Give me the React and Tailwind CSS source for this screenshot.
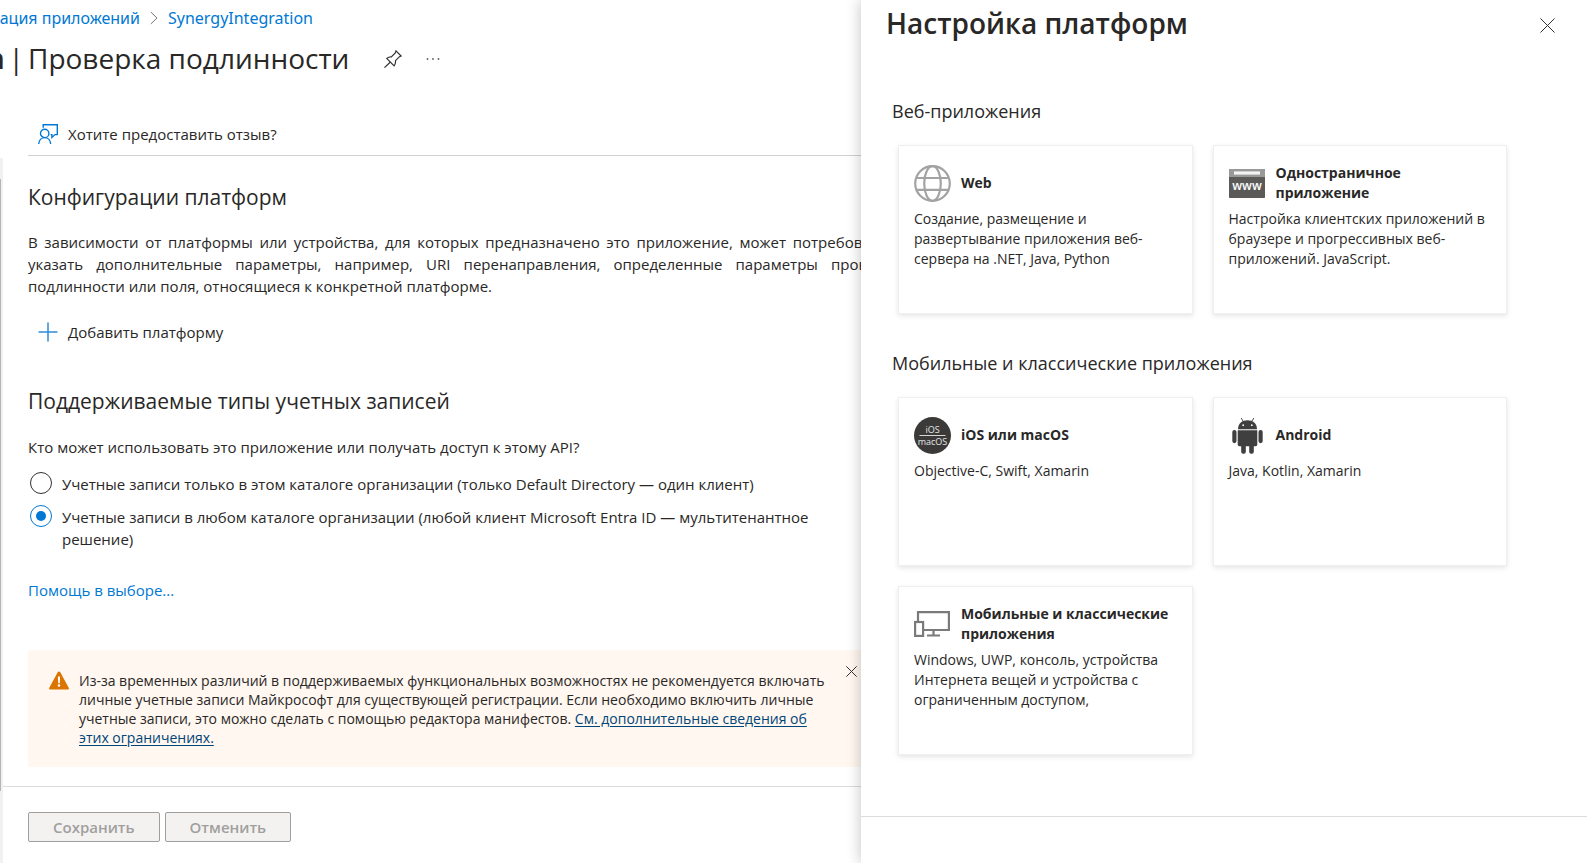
import { useState } from "react";

function ChevronIcon() {
  return (
    <svg className="h-4 w-2" viewBox="0 0 8 16" fill="none" stroke="#7a7876" aria-hidden="true">
      <path d="M.8 2 7 8 .8 14" />
    </svg>
  );
}

function PinIcon() {
  return (
    <svg className="size-[18px]" viewBox="0 0 18 18" fill="none" stroke="#323130" strokeWidth="1.2" aria-hidden="true">
      <path d="M12 .9 17.1 6l-1.6.7-4 4c.2 2-.3 3.800-1.400 5.100L2.700 8.400C4 7.300 5.500 6.700 7.300 6.800l4-4z" />
      <path d="M6.400 12 .5 17.600" />
    </svg>
  );
}

function FeedbackIcon() {
  return (
    <svg className="size-5" viewBox="0 0 20 20" fill="none" stroke="#0078d4" strokeWidth="1.400" aria-hidden="true">
      <circle cx="6.700" cy="9.400" r="4.200" />
      <path d="M.7 20c.2-3.800 2.700-6.400 6-6.400s5.800 2.600 6 6.400" />
      <path d="M5.200 3.800V.8h14.100v9.800h-2.300l-3.100 2.900v-2.900h-1.300" />
    </svg>
  );
}

function PlusIcon() {
  return (
    <svg className="size-5" viewBox="0 0 20 20" stroke="#2b8cdb" strokeWidth="1.500" aria-hidden="true">
      <path d="M10 .5v19M.5 10h19" />
    </svg>
  );
}

function CloseIcon({ className }) {
  return (
    <svg className={className} viewBox="0 0 16 16" stroke="#323130" aria-hidden="true">
      <path d="m.5.5 15 15m0-15-15 15" vectorEffect="non-scaling-stroke" />
    </svg>
  );
}

function WarningIcon() {
  return (
    <svg className="h-[19px] w-5 shrink-0" viewBox="0 0 20 19" aria-hidden="true">
      <path d="M10 .5c.6 0 1 .3 1.300.8l8.400 15.500c.5.900 0 1.700-1 1.700H1.300c-1 0-1.500-.8-1-1.700L8.700 1.300c.3-.5.7-.8 1.300-.8z" fill="#db7500" />
      <path d="M8.900 5.600h2.200l-.3 6.600H9.200z" fill="#fff" />
      <circle cx="10" cy="14.500" r="1.300" fill="#fff" />
    </svg>
  );
}

function GlobeIcon() {
  return (
    <svg className="size-[37px]" viewBox="0 0 37 37" fill="none" stroke="#a3a3a3" strokeWidth="2.200" aria-hidden="true">
      <circle cx="18.500" cy="18.500" r="17.300" />
      <ellipse cx="18.500" cy="18.500" rx="8.300" ry="17.300" />
      <path d="M2.300 13h32.400M2.300 24.800h32.400" />
    </svg>
  );
}

function BrowserIcon() {
  return (
    <svg className="h-[29px] w-9" viewBox="0 0 36 29" aria-hidden="true">
      <rect width="36" height="29" rx=".8" fill="#5b5a59" />
      <path d="M0 8V.8Q0 0 .8 0h34.400q.8 0 .8.800V8z" fill="#999" />
      <rect x="5" y="2.400" width="26" height="3.200" fill="#f4f4f4" />
      <text x="18" y="20.500" textAnchor="middle" fill="#fff" className="font-['Open_Sans',sans-serif] text-[12px] font-semibold">
        www
      </text>
    </svg>
  );
}

function AppleIcon() {
  return (
    <svg className="size-[37px]" viewBox="0 0 37 37" aria-hidden="true">
      <circle cx="18.500" cy="18.500" r="18.500" fill="#3b3a39" />
      <path d="M5.500 18.500h26" stroke="#d6d6d6" />
      <text x="18.500" y="15.500" textAnchor="middle" fill="#e6e6e6" className="font-['Open_Sans',sans-serif] text-[9px]">
        iOS
      </text>
      <text x="18.500" y="28" textAnchor="middle" fill="#e6e6e6" className="font-['Open_Sans',sans-serif] text-[9px]">
        macOS
      </text>
    </svg>
  );
}

function AndroidIcon() {
  return (
    <svg className="size-[37px]" viewBox="0 0 37 37" fill="#3f3f3f" aria-hidden="true">
      <path d="M9 12.200C9 6.500 13.300 3.300 18.500 3.300S28 6.500 28 12.200z" />
      <path d="m14.500 5-2.300-4M22.500 5l2.300-4" stroke="#3f3f3f" strokeWidth=".9" />
      <circle cx="14.200" cy="8.200" r=".9" fill="#fff" />
      <circle cx="22.800" cy="8.200" r=".9" fill="#fff" />
      <path d="M8.700 13.200h19.600v14.300q0 1.700-1.700 1.700H10.400q-1.700 0-1.700-1.700z" />
      <rect x="3.300" y="13" width="4.200" height="13.200" rx="2.100" />
      <rect x="29.500" y="13" width="4.200" height="13.200" rx="2.100" />
      <rect x="12.200" y="26" width="4.600" height="10.800" rx="2" />
      <rect x="20.200" y="26" width="4.600" height="10.800" rx="2" />
    </svg>
  );
}

function DevicesIcon() {
  return (
    <svg className="h-[26px] w-9" viewBox="0 0 36 26" fill="none" stroke="#7a7a7a" strokeWidth="2.200" aria-hidden="true">
      <path d="M4 10V1.100h30.900V19H10" />
      <rect x="1.100" y="11" width="8" height="13.900" />
      <path d="M19.500 19v5M13 24.500h13" />
    </svg>
  );
}

const webPlatforms = [
  {
    Icon: GlobeIcon,
    title: "Web",
    text: "Создание, размещение и развертывание приложения веб-сервера на .NET, Java, Python",
  },
  {
    Icon: BrowserIcon,
    title: "Одностраничное приложение",
    text: "Настройка клиентских приложений в браузере и прогрессивных веб-приложений. JavaScript.",
  },
];

const mobilePlatforms = [
  { Icon: AppleIcon, title: "iOS или macOS", text: "Objective-C, Swift, Xamarin" },
  { Icon: AndroidIcon, title: "Android", text: "Java, Kotlin, Xamarin" },
  {
    Icon: DevicesIcon,
    title: "Мобильные и классические приложения",
    text: "Windows, UWP, консоль, устройства Интернета вещей и устройства с ограниченным доступом,",
  },
];

const accountTypes = [
  { id: "single", label: "Учетные записи только в этом каталоге организации (только Default Directory — один клиент)" },
  {
    id: "multi",
    label: "Учетные записи в любом каталоге организации (любой клиент Microsoft Entra ID — мультитенантное решение)",
  },
];

function PlatformCard({ Icon, title, text }) {
  return (
    <button
      type="button"
      className="flex min-h-[169px] flex-col items-stretch justify-start border border-[#efefef] bg-white px-[15px] pt-[17px] pb-4 text-left text-[14px] leading-5 shadow-[0_2px_5px_rgba(0,0,0,0.1)]"
    >
      <span className="flex min-h-10 items-center gap-2.5">
        <span className="flex w-[37px] shrink-0">
          <Icon />
        </span>
        <span className="font-bold">{title}</span>
      </span>
      <span className="mt-1.5">{text}</span>
    </button>
  );
}

function PlatformSection({ heading, items }) {
  return (
    <section>
      <h3 className="pl-[31px] text-[18px] leading-6">{heading}</h3>
      <div className="mt-[22px] grid grid-cols-2 gap-5 pr-20 pl-[37px]">
        {items.map((item) => (
          <PlatformCard key={item.title} {...item} />
        ))}
      </div>
    </section>
  );
}

function PlatformPanel() {
  return (
    <aside className="relative flex w-[726px] shrink-0 flex-col bg-white shadow-[0_0_14px_rgba(0,0,0,0.24)]">
      <header className="flex items-start justify-between pt-[5px] pr-8 pl-[25px]">
        <h2 className="text-[28px] leading-9 font-semibold">Настройка платформ</h2>
        <button type="button" aria-label="Закрыть" className="mt-[13px]">
          <CloseIcon className="size-[15px]" />
        </button>
      </header>
      <div className="flex flex-1 flex-col gap-[37px] pt-[58px] pb-[60px]">
        <PlatformSection heading="Веб-приложения" items={webPlatforms} />
        <PlatformSection heading="Мобильные и классические приложения" items={mobilePlatforms} />
      </div>
      <footer className="h-[47px] border-t border-[#dcdcdc]" />
    </aside>
  );
}

function PageHeader() {
  return (
    <header className="pt-1.5">
      <nav className="flex items-center font-['Noto_Sans',sans-serif] text-[16px] leading-6 whitespace-nowrap text-[#0078d4]">
        <span className="flex w-[140px] justify-end overflow-hidden">
          <a href="#apps">ация приложений</a>
        </span>
        <span className="mx-2.5">
          <ChevronIcon />
        </span>
        <a href="#app">SynergyIntegration</a>
      </nav>
      <div className="mt-2.5 flex items-center">
        <h1 className="flex text-[28px] leading-9 whitespace-nowrap">
          <span className="flex w-7 justify-end gap-1 overflow-hidden pr-1">
            <b className="font-bold">n</b>
            <span>|</span>
          </span>
          Проверка подлинности
        </h1>
        <button type="button" aria-label="Закрепить" className="mt-0.5 ml-[35px]">
          <PinIcon />
        </button>
        <button type="button" aria-label="Дополнительно" className="mt-0.5 ml-6">
          <svg className="h-1 w-[14px]" viewBox="0 0 14 4" fill="#605e5c" aria-hidden="true">
            <circle cx="1.500" cy="2" r=".9" />
            <circle cx="7" cy="2" r=".9" />
            <circle cx="12.500" cy="2" r=".9" />
          </svg>
        </button>
      </div>
      <div className="mt-[47px] ml-7 border-b border-[#d2d0ce] pb-2.5 pl-2.5">
        <button type="button" className="flex items-center gap-2.5 leading-[22px]">
          <FeedbackIcon />
          Хотите предоставить отзыв?
        </button>
      </div>
    </header>
  );
}

function AccountTypes() {
  const [selected, setSelected] = useState("multi");
  return (
    <fieldset>
      <legend>Кто может использовать это приложение или получать доступ к этому API?</legend>
      <div className="mt-3.5 flex flex-col gap-2.5 pl-0.5">
        {accountTypes.map(({ id, label }) => (
          <div key={id} className="flex items-start gap-2.5">
            <input
              type="radio"
              id={id}
              name="account-type"
              checked={selected === id}
              onChange={() => setSelected(id)}
              className="size-[22px] shrink-0 appearance-none rounded-full border border-[#323130] bg-clip-content p-[5px] checked:border-[#0078d4] checked:bg-[#0078d4]"
            />
            <label htmlFor={id} className="pt-px">
              {label}
            </label>
          </div>
        ))}
      </div>
    </fieldset>
  );
}

function Notice() {
  return (
    <div role="alert" className="mt-[49px] flex items-start rounded-l-xs bg-[#fff7f0] pt-[21px] pb-5 pl-[21px] text-[14px] leading-[19px]">
      <WarningIcon />
      <p className="ml-2.5 flex-1">
        Из-за временных различий в поддерживаемых функциональных возможностях не рекомендуется включать личные учетные
        записи Майкрософт для существующей регистрации. Если необходимо включить личные учетные записи, это можно сделать
        с помощью редактора манифестов.{" "}
        <a href="#limits" className="text-[#004578] underline underline-offset-2">
          См. дополнительные сведения об этих ограничениях.
        </a>
      </p>
      <button type="button" aria-label="Закрыть уведомление" className="-mt-[5px] mr-1 ml-2.5">
        <CloseIcon className="size-[11px]" />
      </button>
    </div>
  );
}

function FooterButton({ children }) {
  return (
    <button
      type="button"
      disabled
      className="h-[30px] rounded-xs border border-[#a19f9d] bg-[#f3f2f1] px-6 leading-[26px] font-semibold text-[#a19f9d]"
    >
      {children}
    </button>
  );
}

export default function App() {
  return (
    <div className="flex min-h-screen overflow-hidden bg-white font-['Open_Sans','Noto_Sans',sans-serif] text-[15px] leading-[22px] text-[#292827]">
      <main className="flex min-w-0 flex-1 flex-col overflow-hidden">
        <PageHeader />
        <div className="mt-0.5 flex flex-1">
          <div className="w-[3px] shrink-0 bg-[#f1f1f1] pt-[21px] pb-[72px]">
            <div className="h-full w-px bg-[#b5b5b5]" />
          </div>
          <div className="flex min-w-0 flex-1 flex-col">
            <div className="pt-[25px] pb-[19px] pl-[25px]">
              <h2 className="text-[21px] leading-7">Конфигурации платформ</h2>
              <p className="mt-5 w-[874px] text-justify">
                В зависимости от платформы или устройства, для которых предназначено это приложение, может потребоваться
                указать дополнительные параметры, например, URI перенаправления, определенные параметры проверки
                подлинности или поля, относящиеся к конкретной платформе.
              </p>
              <button type="button" className="mt-6 ml-2.5 flex items-center gap-2.5">
                <PlusIcon />
                Добавить платформу
              </button>
              <h2 className="mt-11 mb-[21px] text-[21px] leading-7">Поддерживаемые типы учетных записей</h2>
              <AccountTypes />
              <p className="mt-[29px]">
                <a href="#help" className="text-[#0078d4]">
                  Помощь в выборе...
                </a>
              </p>
              <Notice />
            </div>
            <footer className="flex flex-1 items-start gap-[5px] border-t border-[#dcdcdc] pt-[25px] pl-[25px]">
              <FooterButton>Сохранить</FooterButton>
              <FooterButton>Отменить</FooterButton>
            </footer>
          </div>
        </div>
      </main>
      <PlatformPanel />
    </div>
  );
}
